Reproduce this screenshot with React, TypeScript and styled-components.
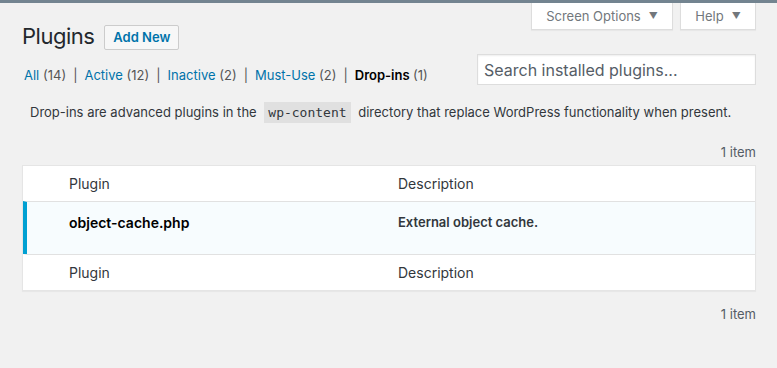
import React from "react";
import styled, { createGlobalStyle } from "styled-components";

const GlobalStyle = createGlobalStyle`
  html, body {
    margin: 0;
    padding: 0;
    background: #f1f1f1;
  }
  body {
    font-family: Inter, "Liberation Sans", sans-serif;
    font-size: 13px;
    color: #444;
  }
`;

const AdminBar = styled.div`
  height: 3px;
  background: #738490;
`;

const Wrap = styled.div`
  padding: 0 21px 0 22px;
`;

const MetaLinks = styled.div`
  float: right;
  display: flex;
  gap: 7px;
`;

const MetaTab = styled.button<{ $w: number }>`
  width: ${(p) => p.$w}px;
  height: 27px;
  background: #fff;
  border: 1px solid #ddd;
  border-top: none;
  box-shadow: 0 1px 1px rgba(0, 0, 0, 0.04);
  font-family: inherit;
  font-size: 13px;
  color: #72777c;
  display: flex;
  align-items: center;
  justify-content: center;
  gap: 8px;
  padding: 0 0 1px;
`;

const Caret = styled.span`
  font-size: 9px;
  color: #72777c;
`;

const TitleRow = styled.div`
  display: flex;
  align-items: center;
  gap: 10px;
  padding-top: 19px;
  height: 29px;
`;

const Title = styled.h1`
  margin: 0;
  font-size: 22px;
  letter-spacing: -0.5px;
  font-weight: 400;
  color: #23282d;
  line-height: 29px;
`;

const AddNew = styled.a`
  height: 23px;
  padding: 0 8px;
  display: flex;
  align-items: center;
  border: 1px solid #ccc;
  border-radius: 2px;
  background: #f7f7f7;
  color: #0073aa;
  font-weight: 600;
  font-size: 13px;
  margin-top: 1px;
`;

const FilterRow = styled.div`
  display: flex;
  justify-content: space-between;
  align-items: flex-start;
  margin-top: 3px;
`;

const Filters = styled.ul`
  list-style: none;
  margin: 8px 0 0 2px;
  padding: 0;
  display: flex;
  align-items: center;
  color: #555;
  line-height: 26px;
`;

const Filter = styled.li<{ $current?: boolean }>`
  color: ${(p) => (p.$current ? "#000" : "#0073aa")};
  font-weight: ${(p) => (p.$current ? 600 : 400)};
  white-space: pre;
`;

const Count = styled.span`
  color: #555;
  font-weight: 400;
`;

const Sep = styled.span`
  color: #555;
  padding: 0 7px;
`;

const Search = styled.input`
  width: 279px;
  height: 31px;
  box-sizing: border-box;
  border: 1px solid #ddd;
  background: #fff;
  box-shadow: inset 0 1px 2px rgba(0, 0, 0, 0.07);
  font-family: inherit;
  font-size: 16px;
  color: #32373c;
  padding: 0 6px;
  &::placeholder {
    color: #555d66;
  }
`;

const Note = styled.p`
  margin: 14px 0 0 8px;
  line-height: 21px;
  color: #32373c;
`;

const Code = styled.code`
  font-family: "DejaVu Sans Mono", monospace;
  font-size: 13px;
  background: rgba(0, 0, 0, 0.07);
  padding: 0 4px;
  margin: 0 4px;
  display: inline-block;
  line-height: 21px;
`;

const ItemCount = styled.div<{ $gap: number }>`
  margin-top: ${(p) => p.$gap}px;
  text-align: right;
  color: #555d66;
  line-height: 20px;
`;

const Table = styled.div`
  background: #fff;
  border: 1px solid #e5e5e5;
  box-shadow: 0 1px 1px rgba(0, 0, 0, 0.04);
  margin-top: 3px;
`;

const Row = styled.div<{ $active?: boolean; $h: number }>`
  display: grid;
  grid-template-columns: 32px 329px 1fr;
  height: ${(p) => p.$h}px;
  background: ${(p) => (p.$active ? "#f7fcfe" : "#fff")};
  border-left: 4px solid ${(p) => (p.$active ? "#00a0d2" : "transparent")};
  & + & {
    border-top: 1px solid #e1e1e1;
  }
`;

const HeadCell = styled.div`
  padding: 0 10px;
  display: flex;
  align-items: center;
  color: #32373c;
  font-size: 14px;
`;

const BodyCell = styled.div<{ $size: number }>`
  padding: 11px 10px 0;
  color: #000;
  font-weight: 600;
  font-size: ${(p) => p.$size}px;
  line-height: 19px;
`;

const Desc = styled(BodyCell)`
  color: #32373c;
`;

const filters = [
  { label: "All", count: 14 },
  { label: "Active", count: 12 },
  { label: "Inactive", count: 2 },
  { label: "Must-Use", count: 2 },
  { label: "Drop-ins", count: 1, current: true },
];

export default function App() {
  return (
    <>
      <GlobalStyle />
      <AdminBar />
      <Wrap>
        <MetaLinks>
          <MetaTab $w={142}>
            Screen Options <Caret>▼</Caret>
          </MetaTab>
          <MetaTab $w={76}>
            Help <Caret>▼</Caret>
          </MetaTab>
        </MetaLinks>
        <TitleRow>
          <Title>Plugins</Title>
          <AddNew>Add New</AddNew>
        </TitleRow>
        <FilterRow>
          <Filters>
            {filters.map((f, i) => (
              <React.Fragment key={f.label}>
                {i > 0 && <Sep>|</Sep>}
                <Filter $current={f.current}>
                  {f.label} <Count>({f.count})</Count>
                </Filter>
              </React.Fragment>
            ))}
          </Filters>
          <Search placeholder="Search installed plugins..." />
        </FilterRow>
        <Note>
          Drop-ins are advanced plugins in the <Code>wp-content</Code> directory that replace
          WordPress functionality when present.
        </Note>
        <ItemCount $gap={19}>1 item</ItemCount>
        <Table>
          <Row $h={35}>
            <span />
            <HeadCell>Plugin</HeadCell>
            <HeadCell>Description</HeadCell>
          </Row>
          <Row $active $h={52}>
            <span />
            <BodyCell $size={14}>object-cache.php</BodyCell>
            <Desc $size={13}>External object cache.</Desc>
          </Row>
          <Row $h={35}>
            <span />
            <HeadCell>Plugin</HeadCell>
            <HeadCell>Description</HeadCell>
          </Row>
        </Table>
        <ItemCount $gap={13}>1 item</ItemCount>
      </Wrap>
    </>
  );
}
